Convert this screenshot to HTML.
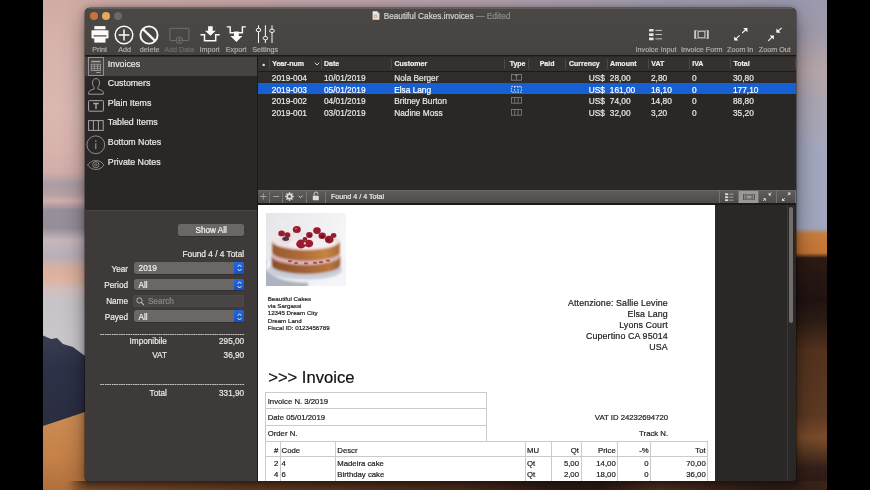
<!DOCTYPE html>
<html lang="en"><head><meta charset="utf-8"><title>Beautiful Cakes.invoices</title>
<style>
html,body{margin:0;padding:0;background:#000;}
body{width:870px;height:490px;position:relative;overflow:hidden;font-family:"Liberation Sans",sans-serif;}
#root{position:absolute;left:0;top:0;width:870px;height:490px;will-change:transform;}
.t{position:absolute;white-space:nowrap;line-height:1;-webkit-text-stroke:0.2px currentColor;}
.r{position:absolute;}
svg{position:absolute;overflow:visible;}
</style></head>
<body>
<div id="root">
<div class="r" style="left:43px;top:0;width:784px;height:490px;overflow:hidden;background:linear-gradient(90deg,#cfaba5 0%,#c9a7a6 20%,#b3a0ab 55%,#a09bac 80%,#9a99ad 100%);">
<div class="r" style="left:0;top:0;width:60px;height:490px;background:linear-gradient(180deg,#cfaba4 0px,#d6b2ab 40px,#dab7b1 110px,#d8b3ad 150px,#d2adaa 172px,#aa9da4 184px,#b3a0a4 194px,#d2adaa 201px,#978f9a 210px,#958e99 228px,#c6b6b9 240px,#b6b0ba 256px,#d9b0a2 268px,#e0b29e 278px,#d2bfbd 290px,#c7c4c8 302px,#c9c7ca 340px);"></div>
<svg style="left:0;top:330px" width="60" height="160" viewBox="0 0 60 160"><defs><linearGradient id="mt" x1="0" y1="0" x2="0" y2="1"><stop offset="0" stop-color="#3a3d50"/><stop offset="0.35" stop-color="#2d3148"/><stop offset="1" stop-color="#2a2d40"/></linearGradient><linearGradient id="dn" x1="0" y1="0" x2="0" y2="1"><stop offset="0" stop-color="#d9a26c"/><stop offset="0.08" stop-color="#cc8c54"/><stop offset="0.6" stop-color="#c48148"/><stop offset="1" stop-color="#b0703c"/></linearGradient></defs><path d="M0 5.5L8 9 14 8 20 14 30 17 42 26V100H0z" fill="url(#mt)"/><path d="M0 96L42 82 60 78V160H0z" fill="url(#dn)"/></svg>
<div class="r" style="left:740px;top:0;width:44px;height:490px;background:linear-gradient(180deg,#9a99ad 0px,#a19bab 35px,#b5a5a8 70px,#aba4b0 100px,#a3a7be 150px,#a1a6be 228px,#c77c3e 234px,#c47434 253px,#2c1a14 258px,#1f1312 300px,#2e1c15 322px,#52321e 350px,#5c3922 415px,#7a4c2c 438px,#5a3822 452px,#34201a 468px,#2a1812 490px);"></div>
</div>
<div class="r" style="left:85px;top:8.4px;width:711px;height:472.6px;border-radius:5px 5px 4px 4px;background:#2a2727;box-shadow:0 0 0 0.5px rgba(0,0,0,.55),0 8px 22px rgba(0,0,0,.45),0 0 6px rgba(0,0,0,.3);overflow:hidden;">
<div class="r" style="left:0;top:0;width:100%;height:47px;background:linear-gradient(180deg,#4b4744 0%,#494542 55%,#45413f 100%);border-top:0.5px solid #62605e;"></div>
<div class="r" style="left:0;top:46.5px;width:100%;height:1px;background:#1a1818;"></div>
</div>
<div class="r" style="left:89.8px;top:11.9px;width:7.8px;height:7.8px;border-radius:50%;background:#c8733f;"></div>
<div class="r" style="left:102.19999999999999px;top:11.9px;width:7.8px;height:7.8px;border-radius:50%;background:#e8a955;"></div>
<div class="r" style="left:114.3px;top:11.9px;width:7.8px;height:7.8px;border-radius:50%;background:#6b6968;"></div>
<svg style="left:372.3px;top:11.2px" width="8" height="9" viewBox="0 0 8 9"><path d="M0.6 0.3h4.6l2.2 2.2v6.2h-6.8z" fill="#e9e7e6"/><path d="M5.2 0.3v2.2h2.2z" fill="#b5b2b1"/><circle cx="3.6" cy="5.4" r="1.4" fill="none" stroke="#d98a4a" stroke-width="0.9"/></svg>
<div class="t" style="top:13px;font-size:8.25px;color:#d4d2d1;left:383.7px;">Beautiful Cakes.invoices</div>
<div class="t" style="top:12px;font-size:8.4px;color:#8f8c8b;left:476px;">— Edited</div>
<div class="t" style="top:46px;font-size:7.2px;color:#b0adac;left:99.6px;transform:translateX(-50%);">Print</div>
<div class="t" style="top:46px;font-size:7.2px;color:#b0adac;left:124.7px;transform:translateX(-50%);">Add</div>
<div class="t" style="top:46px;font-size:7.2px;color:#b0adac;left:149.6px;transform:translateX(-50%);">delete</div>
<div class="t" style="top:46px;font-size:7.2px;color:#6f6c6b;left:179.3px;transform:translateX(-50%);">Add Data</div>
<div class="t" style="top:46px;font-size:7.2px;color:#b0adac;left:209.7px;transform:translateX(-50%);">Import</div>
<div class="t" style="top:46px;font-size:7.2px;color:#b0adac;left:236.2px;transform:translateX(-50%);">Export</div>
<div class="t" style="top:46px;font-size:7.2px;color:#b0adac;left:265.2px;transform:translateX(-50%);">Settings</div>
<div class="t" style="top:46px;font-size:7.2px;color:#b0adac;left:656px;transform:translateX(-50%);">Invoice Input</div>
<div class="t" style="top:46px;font-size:7.2px;color:#b0adac;left:701.8px;transform:translateX(-50%);">Invoice Form</div>
<div class="t" style="top:46px;font-size:7.2px;color:#b0adac;left:740.2px;transform:translateX(-50%);">Zoom In</div>
<div class="t" style="top:46px;font-size:7.2px;color:#b0adac;left:774.8px;transform:translateX(-50%);">Zoom Out</div>
<svg style="left:91px;top:25px" width="18" height="19" viewBox="0 0 18 19"><rect x="3.3" y="1.1" width="11.2" height="5.5" fill="#fbfaf9"/><rect x="0.5" y="5.2" width="17" height="8.2" rx="1" fill="#fbfaf9"/><rect x="2.6" y="10.3" width="12.8" height="1.4" fill="#484442"/><rect x="3.3" y="11.7" width="11.2" height="5.9" fill="#fbfaf9"/><rect x="2.9" y="4.3" width="12" height="0.9" fill="#484442"/></svg>
<svg style="left:114.2px;top:24.5px" width="20" height="20" viewBox="0 0 20 20"><circle cx="10" cy="10" r="8.8" fill="none" stroke="#fbfaf9" stroke-width="1.5"/><path d="M10 4.6v10.8M4.6 10h10.8" stroke="#fbfaf9" stroke-width="1.5"/></svg>
<svg style="left:139.1px;top:24.5px" width="20" height="20" viewBox="0 0 20 20"><circle cx="10" cy="10" r="8.6" fill="none" stroke="#fbfaf9" stroke-width="1.9"/><path d="M4.2 4.4L15.8 15.6" stroke="#fbfaf9" stroke-width="2.2"/></svg>
<svg style="left:169px;top:27px" width="21" height="18" viewBox="0 0 21 18"><path d="M7.2 13.6H1.6a0.7 0.7 0 0 1-.7-.7V2a0.7 0.7 0 0 1 .7-.7h17.6a0.7 0.7 0 0 1 .7.7v10.9a0.7 0.7 0 0 1-.7.7h-5.4" fill="none" stroke="#777473" stroke-width="0.9"/><circle cx="10.4" cy="13.3" r="3.3" fill="#484442" stroke="#777473" stroke-width="0.9"/><path d="M10.4 11.3v4M8.4 13.3h4" stroke="#777473" stroke-width="0.9"/></svg>
<svg style="left:200px;top:25px" width="21" height="19" viewBox="0 0 21 19"><path d="M0.5 9.7h4v6h11.2v-6h4" fill="none" stroke="#fbfaf9" stroke-width="1.5" transform="translate(0,0)"/><path d="M1.2 9.7h2.6v6.6h12.6V9.7h2.8" fill="none" stroke="#fbfaf9" stroke-width="0" /><path d="M8.1 1.2h4.6v4.6h3.1l-5.4 5-5.4-5h3.1z" fill="#fbfaf9"/></svg>
<svg style="left:226px;top:25px" width="21" height="19" viewBox="0 0 21 19"><path d="M0.8 1.9h3.4v5.8h12.2V1.9h3.4" fill="none" stroke="#fbfaf9" stroke-width="1.4"/><path d="M8 6.5h4.8v4.4h3.6l-6 6.2-6-6.2H8z" fill="#fbfaf9"/></svg>
<svg style="left:255px;top:24px" width="21" height="21" viewBox="0 0 21 21"><path d="M3.5 1.3v17.7M10.4 1.3v17.7M17 1.3v17.7" stroke="#fbfaf9" stroke-width="1"/><ellipse cx="3.5" cy="6" rx="2.3" ry="1.7" fill="#484442" stroke="#fbfaf9" stroke-width="1"/><ellipse cx="10.4" cy="14.2" rx="2.3" ry="1.7" fill="#484442" stroke="#fbfaf9" stroke-width="1"/><ellipse cx="17" cy="6.8" rx="2.3" ry="1.7" fill="#484442" stroke="#fbfaf9" stroke-width="1"/></svg>
<svg style="left:649px;top:28px" width="14" height="13" viewBox="0 0 14 13"><rect x="0" y="1.0" width="4.6" height="2.6" rx="0.4" fill="#e4e2e1"/><rect x="6.4" y="1.9" width="6.6" height="0.8" fill="#e4e2e1"/><rect x="0" y="5.3" width="4.6" height="2.6" rx="0.4" fill="#e4e2e1"/><rect x="6.4" y="6.2" width="6.6" height="0.8" fill="#e4e2e1"/><rect x="0" y="9.6" width="4.6" height="2.6" rx="0.4" fill="#e4e2e1"/><rect x="6.4" y="10.5" width="6.6" height="0.8" fill="#e4e2e1"/></svg>
<svg style="left:694px;top:30px" width="15" height="9" viewBox="0 0 15 9"><rect x="0.2" y="0.2" width="1.9" height="8.6" fill="#c9c6c5"/><rect x="12.9" y="0.2" width="1.9" height="8.6" fill="#c9c6c5"/><rect x="4.1" y="1.2" width="6.8" height="6.6" fill="none" stroke="#c9c6c5" stroke-width="1.2"/><path d="M2.1 0.5h1.2M2.1 8.5h1.2M11.7 0.5h1.2M11.7 8.5h1.2" stroke="#c9c6c5" stroke-width="0.6"/></svg>
<svg style="left:0;top:0" width="870" height="60" viewBox="0 0 870 60"><path d="M742.2 33L745.72 29.68" fill="none" stroke="#fbfaf9" stroke-width="1.1"/><path d="M747.4 28L743.20 28L747.4 32.20z" fill="#fbfaf9"/><path d="M739.6 35.4L735.88 38.92" fill="none" stroke="#fbfaf9" stroke-width="1.1"/><path d="M734.2 40.6L738.40 40.6L734.2 36.40z" fill="#fbfaf9"/><path d="M781.6 27.8L778.08 31.12" fill="none" stroke="#fbfaf9" stroke-width="1.1"/><path d="M776.4 32.8L780.60 32.8L776.4 28.60z" fill="#fbfaf9"/><path d="M768.2 40.8L772.12 37.08" fill="none" stroke="#fbfaf9" stroke-width="1.1"/><path d="M773.8 35.4L769.60 35.4L773.8 39.60z" fill="#fbfaf9"/></svg>
<div class="r" style="left:85px;top:56px;width:172px;height:154.5px;background:#2a2727;"></div>
<div class="r" style="left:85px;top:56.6px;width:171.6px;height:19.3px;background:#464342;"></div>
<div class="r" style="left:256.6px;top:56px;width:1px;height:425px;background:#1b1919;"></div>
<div class="t" style="top:60px;font-size:8.8px;color:#eceae9;left:107.8px;">Invoices</div>
<div class="t" style="top:79px;font-size:8.8px;color:#eceae9;left:107.8px;">Customers</div>
<div class="t" style="top:99px;font-size:8.8px;color:#eceae9;left:107.8px;">Plain Items</div>
<div class="t" style="top:118px;font-size:8.8px;color:#eceae9;left:107.8px;">Tabled Items</div>
<div class="t" style="top:138px;font-size:8.8px;color:#eceae9;left:107.8px;">Bottom Notes</div>
<div class="t" style="top:158px;font-size:8.8px;color:#eceae9;left:107.8px;">Private Notes</div>
<svg style="left:87.5px;top:57px" width="16" height="19" viewBox="0 0 16 19"><rect x="0.5" y="0.5" width="15" height="18" fill="none" stroke="#a9a6a5" stroke-width="0.8"/><rect x="3.2" y="3.8" width="9.4" height="1.5" fill="#a9a6a5"/><rect x="3.2" y="7.2" width="9.4" height="6.4" fill="none" stroke="#a9a6a5" stroke-width="0.8"/><path d="M3.2 9.3h9.4M3.2 11.4h9.4M6.3 7.2v6.4M9.5 7.2v6.4" stroke="#a9a6a5" stroke-width="0.7"/><rect x="8.2" y="15" width="4.4" height="0.9" fill="#a9a6a5"/></svg>
<svg style="left:87.5px;top:77.5px" width="16" height="17" viewBox="0 0 16 17"><path d="M8 0.6c2.3 0 3.5 1.7 3.5 4.2 0 2-0.8 3.7-1.6 4.6v1.6c2.4 0.7 5 1.6 5.4 3.3 0.1 0.6 0.1 1.3 0.1 1.9H0.6c0-0.6 0-1.3 0.1-1.9 0.4-1.7 3-2.6 5.4-3.3V9.4C5.3 8.5 4.5 6.8 4.5 4.8 4.5 2.3 5.7 0.6 8 0.6z" fill="none" stroke="#a9a6a5" stroke-width="0.9"/></svg>
<svg style="left:88px;top:100px" width="16" height="12" viewBox="0 0 16 12"><rect x="0.6" y="0.6" width="14.8" height="10.6" rx="0.6" fill="none" stroke="#a9a6a5" stroke-width="1"/><path d="M5.2 3.5h5.6M8 3.5v5.6" stroke="#a9a6a5" stroke-width="1.4"/></svg>
<svg style="left:88px;top:120px" width="16" height="11" viewBox="0 0 16 11"><rect x="0.6" y="0.6" width="14.6" height="9.8" fill="none" stroke="#a9a6a5" stroke-width="1"/><path d="M5.4 0.6v9.8M10.4 0.6v9.8" stroke="#a9a6a5" stroke-width="1"/></svg>
<svg style="left:86px;top:135px" width="20" height="20" viewBox="0 0 20 20"><circle cx="9.8" cy="9.8" r="8.9" fill="none" stroke="#a9a6a5" stroke-width="0.8"/><path d="M9.8 8.3v5.7" stroke="#a9a6a5" stroke-width="1"/><circle cx="9.8" cy="6.1" r="0.75" fill="#a9a6a5"/></svg>
<svg style="left:86.8px;top:159.6px" width="18" height="10.4" viewBox="0 0 19 11"><path d="M0.6 5.3C3.5 1.6 6.3 0.6 9.3 0.6s5.900 1 8.700 4.700C15.200 9 12.300 10 9.300 10S3.5 9 0.6 5.3z" fill="none" stroke="#a9a6a5" stroke-width="0.8"/><circle cx="9.3" cy="5" r="3.3" fill="none" stroke="#a9a6a5" stroke-width="0.8"/><circle cx="9.3" cy="5" r="1.2" fill="none" stroke="#a9a6a5" stroke-width="0.7"/></svg>
<div class="r" style="left:85px;top:210px;width:171.6px;height:1px;background:#484544;"></div>
<div class="r" style="left:85px;top:211px;width:171.6px;height:270px;background:#3d3a39;border-radius:0 0 0 4px;"></div>
<div class="r" style="left:178.3px;top:224.2px;width:65.8px;height:11.6px;background:#6a6766;border-radius:2.5px;box-shadow:0 0.5px 0 rgba(0,0,0,.35);"></div>
<div class="t" style="top:227px;font-size:8.2px;color:#f4f2f1;left:211.2px;transform:translateX(-50%);">Show All</div>
<div class="t" style="top:250px;font-size:8.3px;color:#eceae9;right:625.90px;">Found 4 / 4 Total</div>
<div class="t" style="top:266px;font-size:8.2px;color:#eceae9;right:742.00px;">Year</div>
<div class="r" style="left:133.8px;top:262.1px;width:110.3px;height:11.8px;background:#6a6766;border-radius:2.5px;overflow:hidden;box-shadow:0 0.5px 0 rgba(0,0,0,.35);"><div class="r" style="right:0;top:0;width:10px;height:100%;background:linear-gradient(180deg,#2468de,#1650c6);"></div></div>
<svg style="left:236.6px;top:264.3px" width="5" height="8" viewBox="0 0 5 8"><path d="M0.6 2.8L2.5 0.8 4.4 2.8M0.6 5L2.5 7 4.4 5" fill="none" stroke="#fff" stroke-width="0.9"/></svg>
<div class="t" style="top:265px;font-size:8.2px;color:#f4f2f1;left:138.6px;">2019</div>
<div class="t" style="top:282px;font-size:8.2px;color:#eceae9;right:742.00px;">Period</div>
<div class="r" style="left:133.8px;top:278.6px;width:110.3px;height:11.8px;background:#6a6766;border-radius:2.5px;overflow:hidden;box-shadow:0 0.5px 0 rgba(0,0,0,.35);"><div class="r" style="right:0;top:0;width:10px;height:100%;background:linear-gradient(180deg,#2468de,#1650c6);"></div></div>
<svg style="left:236.6px;top:280.8px" width="5" height="8" viewBox="0 0 5 8"><path d="M0.6 2.8L2.5 0.8 4.4 2.8M0.6 5L2.5 7 4.4 5" fill="none" stroke="#fff" stroke-width="0.9"/></svg>
<div class="t" style="top:282px;font-size:8.2px;color:#f4f2f1;left:138.6px;">All</div>
<div class="t" style="top:298px;font-size:8.2px;color:#eceae9;right:742.00px;">Name</div>
<div class="t" style="top:314px;font-size:8.2px;color:#eceae9;right:742.00px;">Payed</div>
<div class="r" style="left:133.8px;top:310.4px;width:110.3px;height:11.8px;background:#6a6766;border-radius:2.5px;overflow:hidden;box-shadow:0 0.5px 0 rgba(0,0,0,.35);"><div class="r" style="right:0;top:0;width:10px;height:100%;background:linear-gradient(180deg,#2468de,#1650c6);"></div></div>
<svg style="left:236.6px;top:312.59999999999997px" width="5" height="8" viewBox="0 0 5 8"><path d="M0.6 2.8L2.5 0.8 4.4 2.8M0.6 5L2.5 7 4.4 5" fill="none" stroke="#fff" stroke-width="0.9"/></svg>
<div class="t" style="top:314px;font-size:8.2px;color:#f4f2f1;left:138.6px;">All</div>
<div class="r" style="left:133.3px;top:294.6px;width:110.8px;height:12.4px;background:#484544;border-radius:2.5px;box-shadow:inset 0 0 0 0.5px #545150;"></div>
<svg style="left:136.4px;top:296.6px" width="9.2" height="9.2" viewBox="0 0 8 8"><circle cx="3" cy="3" r="2.3" fill="none" stroke="#c4c1c0" stroke-width="0.8"/><path d="M4.7 4.7L7 7" stroke="#c4c1c0" stroke-width="0.9"/></svg>
<div class="t" style="top:298px;font-size:8.2px;color:#8b8887;left:147.9px;">Search</div>
<div class="t" style="top:331px;font-size:6px;color:#e4e2e1;left:100px;letter-spacing:0.333px;-webkit-text-stroke:0.3px #e4e2e1;">--------------------------------------------------------------</div>
<div class="t" style="top:381px;font-size:6px;color:#e4e2e1;left:100px;letter-spacing:0.333px;-webkit-text-stroke:0.3px #e4e2e1;">--------------------------------------------------------------</div>
<div class="t" style="top:338px;font-size:8.2px;color:#eceae9;right:703.10px;">Imponibile</div>
<div class="t" style="top:338px;font-size:8.2px;color:#eceae9;right:625.90px;">295,00</div>
<div class="t" style="top:352px;font-size:8.2px;color:#eceae9;right:703.10px;">VAT</div>
<div class="t" style="top:352px;font-size:8.2px;color:#eceae9;right:625.90px;">36,90</div>
<div class="t" style="top:390px;font-size:8.2px;color:#eceae9;right:703.10px;">Total</div>
<div class="t" style="top:390px;font-size:8.2px;color:#eceae9;right:625.90px;">331,90</div>
<div class="r" style="left:257.6px;top:56px;width:538.4px;height:134px;background:#2a2727;"></div>
<div class="r" style="left:257.6px;top:56.5px;width:538.4px;height:14.5px;background:#343130;"></div>
<div class="r" style="left:257.6px;top:71px;width:538.4px;height:0.8px;background:#1d1b1b;"></div>
<div class="r" style="left:257.6px;top:72.2px;width:538.4px;height:11.7px;background:#2f2c2c;"></div>
<div class="r" style="left:257.6px;top:83px;width:538.4px;height:11.2px;background:#1760d3;"></div>
<div class="r" style="left:257.6px;top:95.6px;width:538.4px;height:11.7px;background:#2a2727;"></div>
<div class="r" style="left:257.6px;top:107.3px;width:538.4px;height:11.7px;background:#2a2727;"></div>
<div class="r" style="left:269px;top:59px;width:1px;height:10px;background:#4a4746;"></div>
<div class="r" style="left:321px;top:59px;width:1px;height:10px;background:#4a4746;"></div>
<div class="r" style="left:391px;top:59px;width:1px;height:10px;background:#4a4746;"></div>
<div class="r" style="left:504px;top:59px;width:1px;height:10px;background:#4a4746;"></div>
<div class="r" style="left:528px;top:59px;width:1px;height:10px;background:#4a4746;"></div>
<div class="r" style="left:565px;top:59px;width:1px;height:10px;background:#4a4746;"></div>
<div class="r" style="left:607px;top:59px;width:1px;height:10px;background:#4a4746;"></div>
<div class="r" style="left:648px;top:59px;width:1px;height:10px;background:#4a4746;"></div>
<div class="r" style="left:689px;top:59px;width:1px;height:10px;background:#4a4746;"></div>
<div class="r" style="left:730px;top:59px;width:1px;height:10px;background:#4a4746;"></div>
<div class="r" style="left:795px;top:59px;width:1px;height:10px;background:#4a4746;"></div>
<div class="t" style="top:60px;font-size:7.0px;color:#f0eeed;font-weight:700;left:272.2px;">Year-num</div>
<div class="t" style="top:60px;font-size:7.0px;color:#f0eeed;font-weight:700;left:324px;">Date</div>
<div class="t" style="top:60px;font-size:7.0px;color:#f0eeed;font-weight:700;left:394.5px;">Customer</div>
<div class="t" style="top:60px;font-size:7.0px;color:#f0eeed;font-weight:700;left:509.7px;">Type</div>
<div class="t" style="top:60px;font-size:7.0px;color:#f0eeed;font-weight:700;left:547.1px;transform:translateX(-50%);">Paid</div>
<div class="t" style="top:60px;font-size:7.0px;color:#f0eeed;font-weight:700;left:569px;">Currency</div>
<div class="t" style="top:60px;font-size:7.0px;color:#f0eeed;font-weight:700;left:610.1px;">Amount</div>
<div class="t" style="top:60px;font-size:7.0px;color:#f0eeed;font-weight:700;left:651.3px;">VAT</div>
<div class="t" style="top:60px;font-size:7.0px;color:#f0eeed;font-weight:700;left:692.2px;">IVA</div>
<div class="t" style="top:60px;font-size:7.0px;color:#f0eeed;font-weight:700;left:733.4px;">Total</div>
<div class="t" style="top:61px;font-size:7px;color:#f0eeed;font-weight:700;left:263.7px;transform:translateX(-50%);">•</div>
<svg style="left:314px;top:61.5px" width="6" height="4" viewBox="0 0 6 4"><path d="M0.7 0.7L3 3 5.3 0.7" fill="none" stroke="#e6e4e3" stroke-width="0.9"/></svg>
<div class="t" style="top:74px;font-size:8.3px;color:#e9e7e6;left:271.8px;">2019-004</div>
<div class="t" style="top:74px;font-size:8.3px;color:#e9e7e6;left:324px;">10/01/2019</div>
<div class="t" style="top:74px;font-size:8.3px;color:#e9e7e6;left:394.2px;">Nola Berger</div>
<div class="t" style="top:74px;font-size:8.3px;color:#e9e7e6;right:265.20px;">US$</div>
<div class="t" style="top:74px;font-size:8.3px;color:#e9e7e6;left:609.8px;">28,00</div>
<div class="t" style="top:74px;font-size:8.3px;color:#e9e7e6;left:651px;">2,80</div>
<div class="t" style="top:74px;font-size:8.3px;color:#e9e7e6;left:692px;">0</div>
<div class="t" style="top:74px;font-size:8.3px;color:#e9e7e6;left:733px;">30,80</div>
<svg style="left:511px;top:74.00px" width="11" height="7" viewBox="0 0 11 7"><rect x="0.4" y="0.4" width="10" height="5.8" fill="none" stroke="#858281" stroke-width="0.8"/><path d="M5.4 0.4v5.8M3.9 1.4h3" stroke="#858281" stroke-width="0.8"/></svg>
<div class="t" style="top:86px;font-size:8.3px;color:#ffffff;left:271.8px;">2019-003</div>
<div class="t" style="top:86px;font-size:8.3px;color:#ffffff;left:324px;">05/01/2019</div>
<div class="t" style="top:86px;font-size:8.3px;color:#ffffff;left:394.2px;">Elsa Lang</div>
<div class="t" style="top:86px;font-size:8.3px;color:#ffffff;right:265.20px;">US$</div>
<div class="t" style="top:86px;font-size:8.3px;color:#ffffff;left:609.8px;">161,00</div>
<div class="t" style="top:86px;font-size:8.3px;color:#ffffff;left:651px;">16,10</div>
<div class="t" style="top:86px;font-size:8.3px;color:#ffffff;left:692px;">0</div>
<div class="t" style="top:86px;font-size:8.3px;color:#ffffff;left:733px;">177,10</div>
<svg style="left:511px;top:85.72px" width="11" height="7" viewBox="0 0 11 7"><rect x="0.4" y="0.4" width="10" height="5.8" fill="none" stroke="#f4f6fb" stroke-width="0.8" stroke-dasharray="1.6 1"/><path d="M3.7 0.4v5.8M7.1 0.4v5.8" stroke="#f4f6fb" stroke-width="0.8" stroke-dasharray="1.6 1"/></svg>
<div class="t" style="top:97px;font-size:8.3px;color:#e9e7e6;left:271.8px;">2019-002</div>
<div class="t" style="top:97px;font-size:8.3px;color:#e9e7e6;left:324px;">04/01/2019</div>
<div class="t" style="top:97px;font-size:8.3px;color:#e9e7e6;left:394.2px;">Britney Burton</div>
<div class="t" style="top:97px;font-size:8.3px;color:#e9e7e6;right:265.20px;">US$</div>
<div class="t" style="top:97px;font-size:8.3px;color:#e9e7e6;left:609.8px;">74,00</div>
<div class="t" style="top:97px;font-size:8.3px;color:#e9e7e6;left:651px;">14,80</div>
<div class="t" style="top:97px;font-size:8.3px;color:#e9e7e6;left:692px;">0</div>
<div class="t" style="top:97px;font-size:8.3px;color:#e9e7e6;left:733px;">88,80</div>
<svg style="left:511px;top:97.44px" width="11" height="7" viewBox="0 0 11 7"><rect x="0.4" y="0.4" width="10" height="5.8" fill="none" stroke="#858281" stroke-width="0.8"/><path d="M3.7 0.4v5.8M7.1 0.4v5.8" stroke="#858281" stroke-width="0.8"/></svg>
<div class="t" style="top:109px;font-size:8.3px;color:#e9e7e6;left:271.8px;">2019-001</div>
<div class="t" style="top:109px;font-size:8.3px;color:#e9e7e6;left:324px;">03/01/2019</div>
<div class="t" style="top:109px;font-size:8.3px;color:#e9e7e6;left:394.2px;">Nadine Moss</div>
<div class="t" style="top:109px;font-size:8.3px;color:#e9e7e6;right:265.20px;">US$</div>
<div class="t" style="top:109px;font-size:8.3px;color:#e9e7e6;left:609.8px;">32,00</div>
<div class="t" style="top:109px;font-size:8.3px;color:#e9e7e6;left:651px;">3,20</div>
<div class="t" style="top:109px;font-size:8.3px;color:#e9e7e6;left:692px;">0</div>
<div class="t" style="top:109px;font-size:8.3px;color:#e9e7e6;left:733px;">35,20</div>
<svg style="left:511px;top:109.16px" width="11" height="7" viewBox="0 0 11 7"><rect x="0.4" y="0.4" width="10" height="5.8" fill="none" stroke="#858281" stroke-width="0.8"/><path d="M3.7 0.4v5.8M7.1 0.4v5.8" stroke="#858281" stroke-width="0.8"/></svg>
<div class="r" style="left:257.6px;top:190px;width:538.4px;height:13px;background:linear-gradient(180deg,#5e5b5a,#4c4948);border-top:0.5px solid #6a6766;"></div>
<div class="r" style="left:257.6px;top:203px;width:538.4px;height:2px;background:#1b1919;"></div>
<div class="r" style="left:269px;top:190.5px;width:1px;height:12.5px;background:#757271;"></div>
<div class="r" style="left:282px;top:190.5px;width:1px;height:12.5px;background:#757271;"></div>
<div class="r" style="left:306px;top:190.5px;width:1px;height:12.5px;background:#757271;"></div>
<div class="r" style="left:325px;top:190.5px;width:1px;height:12.5px;background:#757271;"></div>
<div class="r" style="left:719px;top:190.5px;width:1px;height:12.5px;background:#757271;"></div>
<div class="r" style="left:738px;top:190.5px;width:1px;height:12.5px;background:#757271;"></div>
<div class="r" style="left:758px;top:190.5px;width:1px;height:12.5px;background:#757271;"></div>
<div class="r" style="left:776px;top:190.5px;width:1px;height:12.5px;background:#757271;"></div>
<div class="r" style="left:795px;top:190.5px;width:1px;height:12.5px;background:#757271;"></div>
<div class="r" style="left:739px;top:190.5px;width:19px;height:12.5px;background:#9b9998;"></div>
<svg style="left:260px;top:193.4px" width="7" height="7" viewBox="0 0 7 7"><path d="M3.3 0.3v6.4M0.1 3.5h6.4" stroke="#b3b0af" stroke-width="0.8"/></svg>
<svg style="left:272.8px;top:193.4px" width="7" height="7" viewBox="0 0 7 7"><path d="M0.3 3.5h6" stroke="#b3b0af" stroke-width="0.8"/></svg>
<svg style="left:285px;top:192.4px" width="9" height="9" viewBox="-4.5 -4.5 9 9"><rect x="-0.75" y="-4.3" width="1.5" height="2.2" fill="#dddbda" transform="rotate(0)"/><rect x="-0.75" y="-4.3" width="1.5" height="2.2" fill="#dddbda" transform="rotate(45)"/><rect x="-0.75" y="-4.3" width="1.5" height="2.2" fill="#dddbda" transform="rotate(90)"/><rect x="-0.75" y="-4.3" width="1.5" height="2.2" fill="#dddbda" transform="rotate(135)"/><rect x="-0.75" y="-4.3" width="1.5" height="2.2" fill="#dddbda" transform="rotate(180)"/><rect x="-0.75" y="-4.3" width="1.5" height="2.2" fill="#dddbda" transform="rotate(225)"/><rect x="-0.75" y="-4.3" width="1.5" height="2.2" fill="#dddbda" transform="rotate(270)"/><rect x="-0.75" y="-4.3" width="1.5" height="2.2" fill="#dddbda" transform="rotate(315)"/><circle cx="0" cy="0" r="2.2" fill="none" stroke="#dddbda" stroke-width="1.5"/></svg>
<svg style="left:298.4px;top:195px" width="5" height="4" viewBox="0 0 5 4"><path d="M0.5 0.7L2.5 2.7 4.5 0.7" fill="none" stroke="#dddbda" stroke-width="0.9"/></svg>
<svg style="left:311.9px;top:191.2px" width="8" height="10" viewBox="0 0 8 10"><rect x="0.8" y="4.7" width="6" height="4.6" rx="0.5" fill="#dddbda"/><path d="M2.2 4.7V2.8a1.8 1.8 0 0 1 3.6 0v0.6" fill="none" stroke="#dddbda" stroke-width="0.9"/></svg>
<div class="t" style="top:194px;font-size:7.15px;color:#eceae9;left:331px;">Found 4 / 4 Total</div>
<svg style="left:724.8px;top:192.5px" width="9" height="9" viewBox="0 0 9 9"><rect x="0" y="0.3" width="3.2" height="1.8" fill="#dddbda"/><rect x="4.3" y="0.7" width="4.2" height="0.9" fill="#a9a6a5"/><rect x="0" y="3.3" width="3.2" height="1.8" fill="#dddbda"/><rect x="4.3" y="3.6999999999999997" width="4.2" height="0.9" fill="#a9a6a5"/><rect x="0" y="6.3" width="3.2" height="1.8" fill="#dddbda"/><rect x="4.3" y="6.7" width="4.2" height="0.9" fill="#a9a6a5"/></svg>
<svg style="left:743px;top:193.6px" width="12" height="6" viewBox="0 0 12 6"><rect x="0.2" y="0" width="1" height="6" fill="#4a4746"/><rect x="10.8" y="0" width="1" height="6" fill="#4a4746"/><rect x="2.9" y="0.9" width="6.2" height="4.2" fill="none" stroke="#4a4746" stroke-width="0.9"/><path d="M1.2 0.4h1.7M1.2 5.6h1.7M9.1 0.4h1.7M9.1 5.6h1.7" stroke="#4a4746" stroke-width="0.5"/></svg>
<svg style="left:0;top:0" width="870" height="210" viewBox="0 0 870 210"><path d="M771.4 192.6L769.80 194.20" fill="none" stroke="#dddbda" stroke-width="0.9"/><path d="M768.6 195.4L771.60 195.4L768.6 192.40z" fill="#dddbda"/><path d="M763 201L764.60 199.40" fill="none" stroke="#dddbda" stroke-width="0.9"/><path d="M765.8 198.2L762.80 198.2L765.8 201.20z" fill="#dddbda"/><path d="M787.6 195.4L789.20 193.80" fill="none" stroke="#dddbda" stroke-width="0.9"/><path d="M790.4 192.6L787.40 192.6L790.4 195.60z" fill="#dddbda"/><path d="M784.8 198.2L783.20 199.80" fill="none" stroke="#dddbda" stroke-width="0.9"/><path d="M782 201L785.00 201L782 198.00z" fill="#dddbda"/></svg>
<div class="r" style="left:257.6px;top:205px;width:538.4px;height:276px;background:#2a2727;border-radius:0 0 4px 0;"></div>
<div class="r" style="left:258px;top:205px;width:457px;height:276px;background:#ffffff;"></div>
<div class="r" style="left:786.8px;top:205px;width:0.6px;height:276px;background:#3a3736;"></div>
<div class="r" style="left:788.5px;top:207.2px;width:4.7px;height:116px;border-radius:2.4px;background:#706d6c;"></div>
<div class="t" style="top:296px;font-size:6.2px;color:#222;left:267.7px;">Beautiful Cakes</div>
<div class="t" style="top:303px;font-size:6.2px;color:#222;left:267.7px;">via Sargassi</div>
<div class="t" style="top:310px;font-size:6.2px;color:#222;left:267.7px;">12345 Dream City</div>
<div class="t" style="top:318px;font-size:6.2px;color:#222;left:267.7px;">Dream Land</div>
<div class="t" style="top:325px;font-size:6.2px;color:#222;left:267.7px;">Fiscal ID: 0123456789</div>
<div class="t" style="top:299px;font-size:8.85px;color:#1c1c1c;right:202.20px;letter-spacing:0.12px;">Attenzione: Sallie Levine</div>
<div class="t" style="top:310px;font-size:8.85px;color:#1c1c1c;right:202.20px;letter-spacing:0.12px;">Elsa Lang</div>
<div class="t" style="top:321px;font-size:8.85px;color:#1c1c1c;right:202.20px;letter-spacing:0.12px;">Lyons Court</div>
<div class="t" style="top:332px;font-size:8.85px;color:#1c1c1c;right:202.20px;letter-spacing:0.12px;">Cupertino CA 95014</div>
<div class="t" style="top:343px;font-size:8.85px;color:#1c1c1c;right:202.20px;letter-spacing:0.12px;">USA</div>
<div class="t" style="top:370px;font-size:16.6px;color:#111;left:268.2px;">&gt;&gt;&gt; Invoice</div>
<div class="r" style="left:265px;top:392px;width:222px;height:1px;background:#cbcbcb;"></div>
<div class="r" style="left:265px;top:408px;width:222px;height:1px;background:#cbcbcb;"></div>
<div class="r" style="left:265px;top:425px;width:222px;height:1px;background:#cbcbcb;"></div>
<div class="r" style="left:265px;top:392px;width:1px;height:49.5px;background:#cbcbcb;"></div>
<div class="r" style="left:486px;top:392px;width:1px;height:49.5px;background:#cbcbcb;"></div>
<div class="t" style="top:398px;font-size:7.75px;color:#1c1c1c;left:267.7px;">Invoice N. 3/2019</div>
<div class="t" style="top:414px;font-size:7.75px;color:#1c1c1c;left:267.7px;">Date 05/01/2019</div>
<div class="t" style="top:430px;font-size:7.75px;color:#1c1c1c;left:267.7px;">Order N.</div>
<div class="t" style="top:414px;font-size:7.75px;color:#1c1c1c;right:201.90px;">VAT ID 24232694720</div>
<div class="t" style="top:430px;font-size:7.75px;color:#1c1c1c;right:201.90px;">Track N.</div>
<div class="r" style="left:265px;top:441px;width:443px;height:1px;background:#cbcbcb;"></div>
<div class="r" style="left:265px;top:456px;width:443px;height:1px;background:#cbcbcb;"></div>
<div class="r" style="left:265px;top:441px;width:1px;height:42px;background:#cbcbcb;"></div>
<div class="r" style="left:280px;top:441px;width:1px;height:42px;background:#cbcbcb;"></div>
<div class="r" style="left:335px;top:441px;width:1px;height:42px;background:#cbcbcb;"></div>
<div class="r" style="left:525px;top:441px;width:1px;height:42px;background:#cbcbcb;"></div>
<div class="r" style="left:551px;top:441px;width:1px;height:42px;background:#cbcbcb;"></div>
<div class="r" style="left:581px;top:441px;width:1px;height:42px;background:#cbcbcb;"></div>
<div class="r" style="left:617px;top:441px;width:1px;height:42px;background:#cbcbcb;"></div>
<div class="r" style="left:650px;top:441px;width:1px;height:42px;background:#cbcbcb;"></div>
<div class="r" style="left:707px;top:441px;width:1px;height:42px;background:#cbcbcb;"></div>
<div class="t" style="top:447px;font-size:7.75px;color:#1c1c1c;right:591.60px;">#</div>
<div class="t" style="top:447px;font-size:7.75px;color:#1c1c1c;left:281.6px;">Code</div>
<div class="t" style="top:447px;font-size:7.75px;color:#1c1c1c;left:337.3px;">Descr</div>
<div class="t" style="top:447px;font-size:7.75px;color:#1c1c1c;left:527.1px;">MU</div>
<div class="t" style="top:447px;font-size:7.75px;color:#1c1c1c;right:291.00px;">Qt</div>
<div class="t" style="top:447px;font-size:7.75px;color:#1c1c1c;right:254.30px;">Price</div>
<div class="t" style="top:447px;font-size:7.75px;color:#1c1c1c;right:221.40px;">-%</div>
<div class="t" style="top:447px;font-size:7.75px;color:#1c1c1c;right:164.30px;">Tot</div>
<div class="t" style="top:460px;font-size:7.75px;color:#1c1c1c;right:591.60px;">2</div>
<div class="t" style="top:460px;font-size:7.75px;color:#1c1c1c;left:281.6px;">4</div>
<div class="t" style="top:460px;font-size:7.75px;color:#1c1c1c;left:337.3px;">Madeira cake</div>
<div class="t" style="top:460px;font-size:7.75px;color:#1c1c1c;left:527.1px;">Qt</div>
<div class="t" style="top:460px;font-size:7.75px;color:#1c1c1c;right:291.00px;">5,00</div>
<div class="t" style="top:460px;font-size:7.75px;color:#1c1c1c;right:254.30px;">14,00</div>
<div class="t" style="top:460px;font-size:7.75px;color:#1c1c1c;right:221.40px;">0</div>
<div class="t" style="top:460px;font-size:7.75px;color:#1c1c1c;right:164.30px;">70,00</div>
<div class="t" style="top:471px;font-size:7.75px;color:#1c1c1c;right:591.60px;">4</div>
<div class="t" style="top:471px;font-size:7.75px;color:#1c1c1c;left:281.6px;">6</div>
<div class="t" style="top:471px;font-size:7.75px;color:#1c1c1c;left:337.3px;">Birthday cake</div>
<div class="t" style="top:471px;font-size:7.75px;color:#1c1c1c;left:527.1px;">Qt</div>
<div class="t" style="top:471px;font-size:7.75px;color:#1c1c1c;right:291.00px;">2,00</div>
<div class="t" style="top:471px;font-size:7.75px;color:#1c1c1c;right:254.30px;">18,00</div>
<div class="t" style="top:471px;font-size:7.75px;color:#1c1c1c;right:221.40px;">0</div>
<div class="t" style="top:471px;font-size:7.75px;color:#1c1c1c;right:164.30px;">36,00</div>
<div class="r" style="left:66px;top:481px;width:761px;height:9px;background:linear-gradient(90deg,#7a4e2c 0px,#7a4e2c 22px,#74482a 72px,#5e3a22 212px,#4a2c1c 392px,#2e1c15 482px,#2a1913 532px,#4a3020 592px,#3a241a 652px,#2c1b15 712px,#3a241a 761px);-webkit-mask-image:linear-gradient(90deg,transparent 0,#000 22px);mask-image:linear-gradient(90deg,transparent 0,#000 22px);"></div>
<div class="r" style="left:70px;top:481px;width:736px;height:9px;background:linear-gradient(180deg,rgba(20,10,6,.62) 0px,rgba(20,10,6,.35) 4px,rgba(20,10,6,.08) 9px);-webkit-mask-image:linear-gradient(90deg,transparent 0,#000 18px,#000 724px,transparent 736px);mask-image:linear-gradient(90deg,transparent 0,#000 18px,#000 724px,transparent 736px);"></div>
<svg style="left:265.7px;top:213.1px" width="80" height="73" viewBox="0 0 80 73"><defs><filter id="bl" x="-10%" y="-10%" width="120%" height="120%"><feGaussianBlur stdDeviation="0.8"/></filter><filter id="bl2"><feGaussianBlur stdDeviation="0.45"/></filter><linearGradient id="bgk" x1="0" y1="0" x2="1" y2="0.3"><stop offset="0" stop-color="#e6e6ea"/><stop offset="0.6" stop-color="#efeff2"/><stop offset="1" stop-color="#f6f6f8"/></linearGradient><linearGradient id="spg" x1="0" y1="0" x2="1" y2="0"><stop offset="0" stop-color="#98592d"/><stop offset="0.45" stop-color="#b06c38"/><stop offset="0.8" stop-color="#c58540"/><stop offset="1" stop-color="#a96a33"/></linearGradient><linearGradient id="spg2" x1="0" y1="0" x2="1" y2="0"><stop offset="0" stop-color="#8c4f28"/><stop offset="0.5" stop-color="#a46232"/><stop offset="0.85" stop-color="#b8763a"/><stop offset="1" stop-color="#9a5c2c"/></linearGradient><clipPath id="ckc"><rect x="0" y="0" width="80" height="73"/></clipPath></defs><g clip-path="url(#ckc)"><rect x="0" y="0" width="80" height="73" fill="url(#bgk)"/><g filter="url(#bl)"><rect x="-4" y="48" width="46" height="30" fill="#adb3c2"/><ellipse cx="41" cy="53" rx="41.5" ry="16.5" fill="#f2f2f6"/><ellipse cx="39" cy="57" rx="37" ry="9.5" fill="#c9cdd8"/><path d="M50 72L84 58V80H40z" fill="#f5f5f8"/><path d="M5.5 44A34.5 9 0 0 1 74.5 44V52A34.5 9 0 0 1 5.5 52z" fill="url(#spg2)"/><path d="M5.799999999999997 40A34.2 9 0 0 1 74.2 40V43A34.2 9 0 0 1 5.799999999999997 43z" fill="#dcb9b9"/><path d="M6.200000000000003 29.5A33.8 9 0 0 1 73.8 29.5V39A33.8 9 0 0 1 6.200000000000003 39z" fill="url(#spg)"/><ellipse cx="40" cy="28" rx="33.6" ry="9" fill="#f0e2e2"/><ellipse cx="46" cy="31" rx="23" ry="5" fill="#f7efef"/><ellipse cx="31" cy="21" rx="5.5" ry="4.5" fill="#ebe4e7"/><ellipse cx="56" cy="23" rx="5.5" ry="4.2" fill="#efe8ea"/><ellipse cx="20" cy="26" rx="5" ry="3.6" fill="#dcd5db"/><ellipse cx="40" cy="25" rx="5" ry="4" fill="#f1e9ea"/><ellipse cx="64" cy="25" rx="4" ry="3.5" fill="#eee3e5"/><ellipse cx="48" cy="20" rx="4" ry="3.5" fill="#ece5e8"/></g><g filter="url(#bl2)" stroke="#f4f4f7" stroke-width="0.6" fill="none"><path d="M20 21L14 8"/><path d="M22 20L30 7"/><path d="M31 15L34 4"/><path d="M44 20L47 9"/><path d="M51 16L46 2"/><path d="M57 21L59 7"/><path d="M64 24L66 9"/><path d="M68 21L71 17"/></g><g filter="url(#bl2)"><ellipse cx="15.6" cy="20.4" rx="3.3" ry="2.90" fill="#991b2f"/><ellipse cx="21.4" cy="22" rx="3" ry="2.64" fill="#991b2f"/><ellipse cx="30.8" cy="16.6" rx="4" ry="3.52" fill="#991b2f"/><ellipse cx="35.2" cy="31" rx="5" ry="4.40" fill="#991b2f"/><ellipse cx="42.8" cy="30.6" rx="4.4" ry="3.87" fill="#991b2f"/><ellipse cx="43.4" cy="22" rx="3.3" ry="2.90" fill="#991b2f"/><ellipse cx="51" cy="17.6" rx="3.8" ry="3.34" fill="#991b2f"/><ellipse cx="56.2" cy="22.8" rx="3.7" ry="3.26" fill="#991b2f"/><ellipse cx="63.2" cy="26.6" rx="4.3" ry="3.78" fill="#991b2f"/><ellipse cx="67.6" cy="22.4" rx="2.8" ry="2.46" fill="#991b2f"/><ellipse cx="39" cy="26" rx="2.4" ry="2.11" fill="#991b2f"/><ellipse cx="19.7" cy="25.8" rx="3.4" ry="2.1" fill="#4b3947"/><ellipse cx="56.2" cy="23.6" rx="1.7" ry="1.5" fill="#5a1820"/><ellipse cx="44" cy="22.8" rx="1.5" ry="1.2" fill="#64161f"/><ellipse cx="62" cy="27" rx="1.5" ry="1.4" fill="#6d1722"/><circle cx="38.8" cy="30.4" r="1.1" fill="#f3d9d9"/><circle cx="30" cy="15.6" r="0.9" fill="#cf7381"/><ellipse cx="30" cy="50" rx="2.2" ry="1.1" fill="#a2323f" opacity="0.8"/><ellipse cx="49" cy="49.8" rx="2.2" ry="1.1" fill="#a2323f" opacity="0.8"/><ellipse cx="55" cy="49.2" rx="2.2" ry="1.1" fill="#a2323f" opacity="0.8"/><ellipse cx="24" cy="48.2" rx="2.2" ry="1.1" fill="#a2323f" opacity="0.8"/><ellipse cx="40" cy="50.4" rx="2.2" ry="1.1" fill="#a2323f" opacity="0.8"/><ellipse cx="62" cy="47.6" rx="2.2" ry="1.1" fill="#a2323f" opacity="0.8"/></g></g></svg>
</div>
</body></html>
